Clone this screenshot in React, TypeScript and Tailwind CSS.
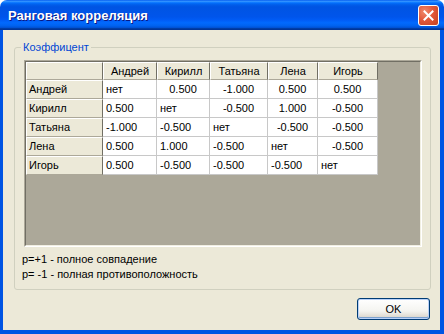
import React from 'react';

const names = ['Андрей', 'Кирилл', 'Татьяна', 'Лена', 'Игорь'];

const data = [
  ['нет', '0.500', '-1.000', '0.500', '0.500'],
  ['0.500', 'нет', '-0.500', '1.000', '-0.500'],
  ['-1.000', '-0.500', 'нет', '-0.500', '-0.500'],
  ['0.500', '1.000', '-0.500', 'нет', '-0.500'],
  ['0.500', '-0.500', '-0.500', '-0.500', 'нет'],
];

const colW = ['w-[54px]', 'w-[53px]', 'w-[58px]', 'w-[50px]', 'w-[60px]'];

const headCell =
  'flex items-center bg-[#ECE9D8] border-t border-l border-t-white border-l-white border-b border-r border-b-[#ACA899] border-r-[#716F64]';

export default function App() {
  return (
    <div className="w-[444px] h-[334px] bg-white font-['Liberation_Sans',Arial,sans-serif] text-[11px] text-black select-none">
      {/* title bar */}
      <div className="h-[30px] rounded-t-[7px] flex items-center justify-between pl-[8px] pr-[5px] bg-[linear-gradient(to_bottom,#0058EE_0%,#3593FF_4%,#288EFF_6%,#127DFF_8%,#036FFC_10%,#0262EE_14%,#0057E5_20%,#0054E3_24%,#0055EB_56%,#005BF5_66%,#026AFE_76%,#0062EF_86%,#0052D6_92%,#0040AB_94%,#003092_100%)]">
        <span className="text-white font-bold text-[13px] leading-none [text-shadow:1px_1px_0_#0A1883]">
          Ранговая корреляция
        </span>
        <div className="w-[21px] h-[21px] rounded-[3px] border border-white flex items-center justify-center bg-[radial-gradient(circle_at_30%_30%,#F08A6C_0%,#E2583A_45%,#C4401F_100%)]">
          <svg width="11" height="11" viewBox="0 0 11 11">
            <path d="M1.5 1.5 L9.5 9.5 M9.5 1.5 L1.5 9.5" stroke="white" strokeWidth="2" strokeLinecap="square" />
          </svg>
        </div>
      </div>

      {/* body */}
      <div className="h-[304px] bg-[#ECE9D8] border-l-[3px] border-r-[4px] border-b-[4px] border-[#0054E3] flex flex-col">
        <div className="relative mt-[17px] ml-[11px] w-[417px] h-[243px] border border-[#D0D0BF] rounded-[3px] pt-[12px] pl-[9px]">
          <span className="absolute -top-[7px] left-[6px] px-[2px] bg-[#ECE9D8] text-[#0046D5] leading-[13px]">
            Коэффицент
          </span>

          {/* grid */}
          <div className="w-[398px] h-[187px] border border-t-[#ACA899] border-l-[#ACA899] border-b-white border-r-white">
            <div className="w-full h-full bg-[#ACA899] border border-t-[#716F64] border-l-[#716F64] border-b-[#F1EFE2] border-r-[#F1EFE2]">
              <div className="flex h-[18px]">
                <div className={`${headCell} w-[77px]`} />
                {names.map((n, j) => (
                  <div key={n} className={`${headCell} ${colW[j]} justify-center`}>
                    {n}
                  </div>
                ))}
              </div>
              {data.map((row, i) => (
                <div key={i} className="flex h-[19px]">
                  <div className={`${headCell} w-[77px] pl-[2px]`}>{names[i]}</div>
                  {row.map((v, j) => (
                    <div
                      key={j}
                      className={`${colW[j]} flex items-center bg-white border-r border-b border-[#C8C8C8] ${
                        j > i ? 'justify-center' : 'pl-[3px]'
                      }`}
                    >
                      {v}
                    </div>
                  ))}
                </div>
              ))}
            </div>
          </div>

          <div className="mt-[5px] pl-[-2px] -ml-[2px] leading-[15px]">
            <div>p=+1 - полное совпадение</div>
            <div>p= -1 - полная противоположность</div>
          </div>
        </div>

        <div className="flex justify-end mt-[8px] pr-[10px]">
          <button className="w-[73px] h-[22px] rounded-[3px] border border-[#003C74] bg-[linear-gradient(to_bottom,#FFFFFF_0%,#F4F4F0_60%,#D6D0C5_100%)] shadow-[inset_0_0_0_1px_#B9D1F8,inset_0_-1px_0_1px_#7DA2CE] flex items-center justify-center text-[11px]">
            OK
          </button>
        </div>
      </div>
    </div>
  );
}
